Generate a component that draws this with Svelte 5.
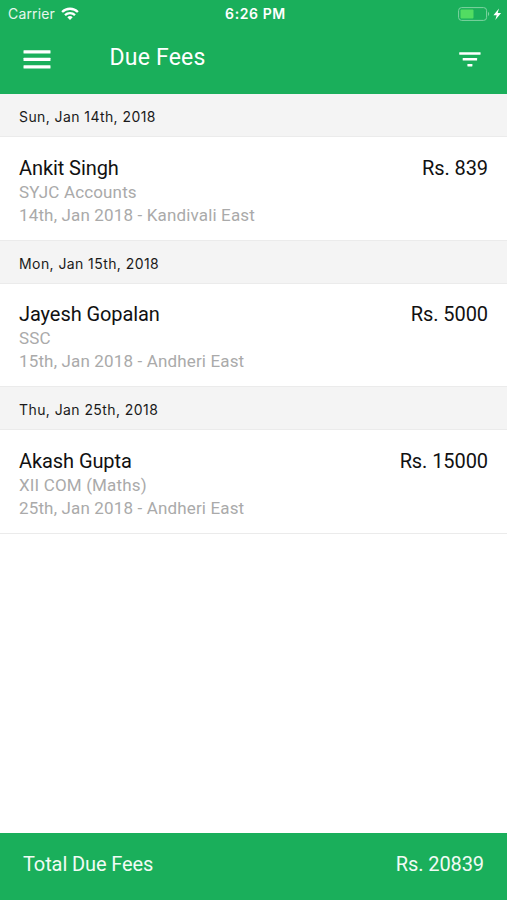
<script>
  const groups = [
    {
      date: "Sun, Jan 14th, 2018",
      fees: [
        { name: "Ankit Singh", course: "SYJC Accounts", info: "14th, Jan 2018 - Kandivali East", amount: 839 },
      ],
    },
    {
      date: "Mon, Jan 15th, 2018",
      fees: [
        { name: "Jayesh Gopalan", course: "SSC", info: "15th, Jan 2018 - Andheri East", amount: 5000 },
      ],
    },
    {
      date: "Thu, Jan 25th, 2018",
      fees: [
        { name: "Akash Gupta", course: "XII COM (Maths)", info: "25th, Jan 2018 - Andheri East", amount: 15000 },
      ],
    },
  ];

  let total = groups.flatMap((g) => g.fees).reduce((sum, fee) => sum + fee.amount, 0);
</script>

<div class="screen">
  <header>
    <div class="status">
      <div class="status__left">
        <span>Carrier</span>
        <svg class="wifi" width="18" height="14" viewBox="0 0 18 14" fill="none" stroke="#fff" stroke-width="2.3">
          <path d="M1.1 5a11.2 11.2 0 0 1 15.8 0" />
          <path d="M4 8.1a7.1 7.1 0 0 1 10 0" />
          <path d="M9 13 6.3 10.3a3.9 3.9 0 0 1 5.4 0z" fill="#fff" stroke="none" />
        </svg>
      </div>
      <div class="status__time">6:26 PM</div>
      <svg class="battery" width="44" height="14" viewBox="0 0 44 14">
        <rect x="0.6" y="0.6" width="28" height="12.8" rx="3" fill="none" stroke="#7fd3a2" />
        <rect x="2.5" y="2.5" width="13" height="9" rx="1" fill="#52dc62" />
        <path d="M30 4.8q2.4 2.2 0 4.4z" fill="#7fd3a2" />
        <path d="M41 1.5 35.4 8.2h3.3L37.3 13l5.8-6.9h-3.4z" fill="#fff" />
      </svg>
    </div>
    <div class="toolbar">
      <svg class="menu" width="28" height="19" viewBox="0 0 28 19" fill="#fff">
        <rect x="0.5" y="0.2" width="27" height="3.2" rx="0.5" />
        <rect x="0.5" y="7.7" width="27" height="3.2" rx="0.5" />
        <rect x="0.5" y="15.2" width="27" height="3.2" rx="0.5" />
      </svg>
      <h1>Due Fees</h1>
      <svg class="filter" width="22" height="15" viewBox="0 0 22 15" fill="#fff">
        <rect x="0.2" y="0.2" width="21.4" height="2.5" rx="0.4" />
        <rect x="3.7" y="6.1" width="14.4" height="2.5" rx="0.4" />
        <rect x="8.4" y="12" width="5" height="2.5" rx="0.4" />
      </svg>
    </div>
  </header>

  <main>
    {#each groups as group}
      <div class="date">{group.date}</div>
      {#each group.fees as fee}
        <div class="fee">
          <div>
            <div class="fee__name">{fee.name}</div>
            <div class="fee__info">{fee.course}</div>
            <div class="fee__info">{fee.info}</div>
          </div>
          <div class="fee__amount">Rs. {fee.amount}</div>
        </div>
      {/each}
    {/each}
  </main>

  <footer>
    <span>Total Due Fees</span>
    <span>Rs. {total}</span>
  </footer>
</div>

<style>
  :global(body) {
    margin: 0;
  }
  .screen {
    display: flex;
    flex-direction: column;
    height: 900px;
    background: #fff;
    font-family: Roboto, sans-serif;
    overflow: hidden;
  }
  header {
    height: 94px;
    background: #1aaf5b;
    color: #fff;
  }
  .status {
    display: grid;
    grid-template-columns: 1fr auto 1fr;
    align-items: center;
    height: 27px;
    padding: 0 5px 0 8px;
    font-family: Inter, sans-serif;
    font-size: 14px;
  }
  .status__left {
    display: flex;
    align-items: center;
    gap: 6px;
  }
  .status__left span {
    color: #e6f7ed;
    letter-spacing: 0.15px;
  }
  .status__time {
    padding-left: 1px;
    font-size: 14px;
    font-weight: 600;
    letter-spacing: 0.6px;
  }
  .battery {
    justify-self: end;
  }
  .toolbar {
    display: flex;
    align-items: center;
    height: 64px;
    padding: 0 26px 0 23px;
  }
  h1 {
    flex: 1;
    margin: 0 0 3px 58.5px;
    font-size: 23px;
    font-weight: 400;
    line-height: 28px;
    letter-spacing: 0.2px;
  }
  .date {
    box-sizing: border-box;
    height: 43px;
    padding-left: 19px;
    border-bottom: 1px solid #ebebeb;
    background: #f4f4f4;
    color: #1a1a1a;
    font-family: Inter, sans-serif;
    font-size: 14px;
    line-height: 46px;
    letter-spacing: 0.42px;
  }
  .fee {
    display: flex;
    justify-content: space-between;
    box-sizing: border-box;
    height: 103.7px;
    padding: 17.6px 19px 0;
    border-bottom: 1px solid #ebebeb;
  }
  .fee__name,
  .fee__amount {
    color: #111;
    font-size: 20px;
    line-height: 26px;
    letter-spacing: -0.08px;
  }
  .fee__info {
    color: #aaa;
    font-size: 17px;
    line-height: 23px;
    letter-spacing: 0.15px;
  }
  footer {
    display: flex;
    justify-content: space-between;
    height: 67px;
    margin-top: auto;
    padding: 0 23px;
    background: #1aaf5b;
    color: #f1fbf5;
    font-size: 20px;
    line-height: 62px;
    letter-spacing: -0.1px;
  }
</style>
